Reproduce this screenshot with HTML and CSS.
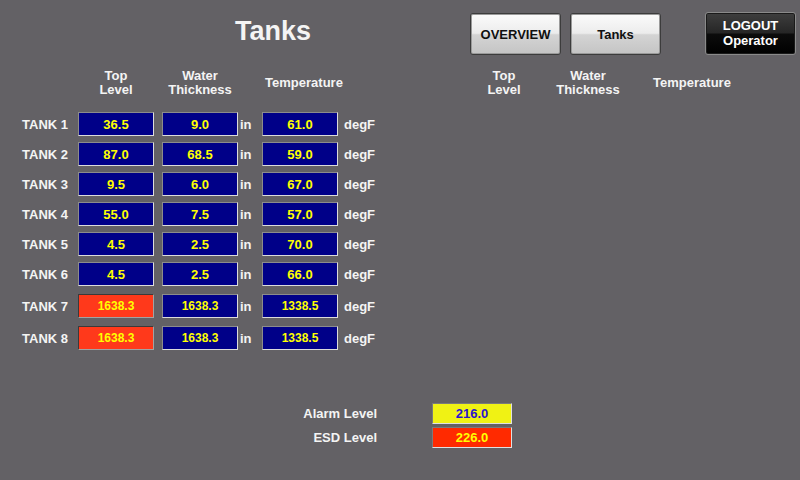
FILE: index.html
```html
<!DOCTYPE html>
<html>
<head>
<meta charset="utf-8">
<link rel="stylesheet" href="styles.css">
</head>
<body>
<div class="screen">
  <div class="top">
    <div class="title">Tanks</div>
    <div class="btn light">OVERVIEW</div>
    <div class="btn light">Tanks</div>
    <div class="btn dark">LOGOUT<br>Operator</div>
  </div>
  <div class="panels">
    <div class="panel">
      <div class="grid heads">
        <div></div>
        <div class="head">Top<br>Level</div>
        <div></div>
        <div class="head">Water<br>Thickness</div>
        <div></div>
        <div class="head">Temperature</div>
        <div></div>
      </div>
      <div class="rows">
        <div class="grid row"><div class="lbl">TANK 1</div><div class="val">36.5</div><div></div><div class="val">9.0</div><div class="unit">in</div><div class="val">61.0</div><div class="unit2">degF</div></div>
        <div class="grid row"><div class="lbl">TANK 2</div><div class="val">87.0</div><div></div><div class="val">68.5</div><div class="unit">in</div><div class="val">59.0</div><div class="unit2">degF</div></div>
        <div class="grid row"><div class="lbl">TANK 3</div><div class="val">9.5</div><div></div><div class="val">6.0</div><div class="unit">in</div><div class="val">67.0</div><div class="unit2">degF</div></div>
        <div class="grid row"><div class="lbl">TANK 4</div><div class="val">55.0</div><div></div><div class="val">7.5</div><div class="unit">in</div><div class="val">57.0</div><div class="unit2">degF</div></div>
        <div class="grid row"><div class="lbl">TANK 5</div><div class="val">4.5</div><div></div><div class="val">2.5</div><div class="unit">in</div><div class="val">70.0</div><div class="unit2">degF</div></div>
        <div class="grid row"><div class="lbl">TANK 6</div><div class="val">4.5</div><div></div><div class="val">2.5</div><div class="unit">in</div><div class="val">66.0</div><div class="unit2">degF</div></div>
        <div class="grid row wide"><div class="lbl">TANK 7</div><div class="val alarm">1638.3</div><div></div><div class="val">1638.3</div><div class="unit">in</div><div class="val">1338.5</div><div class="unit2">degF</div></div>
        <div class="grid row wide"><div class="lbl">TANK 8</div><div class="val alarm">1638.3</div><div></div><div class="val">1638.3</div><div class="unit">in</div><div class="val">1338.5</div><div class="unit2">degF</div></div>
      </div>
    </div>
    <div class="panel">
      <div class="grid heads">
        <div></div>
        <div class="head">Top<br>Level</div>
        <div></div>
        <div class="head">Water<br>Thickness</div>
        <div></div>
        <div class="head">Temperature</div>
        <div></div>
      </div>
    </div>
  </div>
  <div class="limits">
    <div class="llbl">Alarm Level</div><div class="lim yellow">216.0</div>
    <div class="llbl">ESD Level</div><div class="lim red">226.0</div>
  </div>
</div>
</body>
</html>
```
FILE: styles.css
```css
html, body {
  margin: 0;
  padding: 0;
  background: #636165;
}
.screen {
  width: 800px;
  height: 480px;
  overflow: hidden;
  font-family: "Liberation Sans", Arial, sans-serif;
  font-weight: bold;
  font-size: 13px;
  color: #f4f4f4;
}
.top {
  display: flex;
  align-items: flex-start;
  padding-top: 13px;
  height: 56px;
  box-sizing: border-box;
}
.title {
  width: 470px;
  box-sizing: border-box;
  padding-left: 235px;
  font-size: 27px;
  line-height: 27px;
  margin-top: 5px;
}
.btn {
  width: 91px;
  height: 42px;
  box-sizing: border-box;
  border-radius: 3px;
  display: flex;
  align-items: center;
  justify-content: center;
  text-align: center;
  line-height: 15px;
}
.light {
  color: #101010;
  border: 1px solid #3c3c3c;
  box-shadow: inset 0 0 0 1px #9a9a9a;
  background: linear-gradient(#fbfbfb 0%, #ececec 48%, #d4d4d4 52%, #c4c4c4 100%);
}
.light + .light { margin-left: 9px; }
.dark {
  margin-left: 44px;
  margin-top: -1px;
  height: 43px;
  color: #ffffff;
  border: 1px solid #8a8a8a;
  box-shadow: inset 0 0 0 1px #1a1a1a;
  background: linear-gradient(#3e3e3e 0%, #262626 48%, #0c0c0c 52%, #000000 100%);
  padding-bottom: 2px;
}
.panels {
  display: flex;
  padding-top: 13px;
}
.panel {
  width: 388px;
}
.grid {
  display: grid;
  grid-template-columns: 78px 76px 8px 76px 24px 76px 60px;
}
.heads {
  height: 28px;
  align-items: center;
}
.head {
  text-align: center;
  line-height: 14px;
}
.head:nth-child(6) {
  margin-left: -2px;
  margin-right: -10px;
}
.rows {
  display: flex;
  flex-direction: column;
  gap: 6px;
  margin-top: 15px;
}
.row {
  height: 24px;
  align-items: center;
}
.row.wide + .row.wide,
.row:not(.wide) + .row.wide {
  margin-top: 2px;
}
.lbl {
  text-align: right;
  padding-right: 10px;
}
.unit { padding-left: 2px; }
.unit2 { padding-left: 6px; }
.val {
  height: 24px;
  box-sizing: border-box;
  background: #000088;
  color: #ffff00;
  border-top: 1px solid #8c8c8c;
  border-left: 1px solid #8c8c8c;
  border-right: 1px solid #dcdcdc;
  border-bottom: 1px solid #dcdcdc;
  display: flex;
  align-items: center;
  justify-content: center;
  font-size: 13px;
}
.val.alarm {
  background: #ff391b;
  border-top-color: #3a3a3a;
  border-left-color: #3a3a3a;
  border-right-color: #a2a2a2;
  border-bottom-color: #a2a2a2;
  font-size: 12px;
}
.row.wide .val { font-size: 12px; }
.limits {
  display: grid;
  grid-template-columns: 377px 80px;
  column-gap: 55px;
  row-gap: 3px;
  margin-top: 53px;
  align-items: center;
}
.llbl { text-align: right; }
.lim {
  height: 21px;
  box-sizing: border-box;
  display: flex;
  align-items: center;
  justify-content: center;
  border-top: 1px solid #7a7a7a;
  border-left: 1px solid #7a7a7a;
  border-right: 1px solid #e0e0e0;
  border-bottom: 1px solid #e0e0e0;
}
.yellow { background: #f0f214; color: #2a12d0; }
.red { background: #ff2a00; color: #ffff00; }
```
